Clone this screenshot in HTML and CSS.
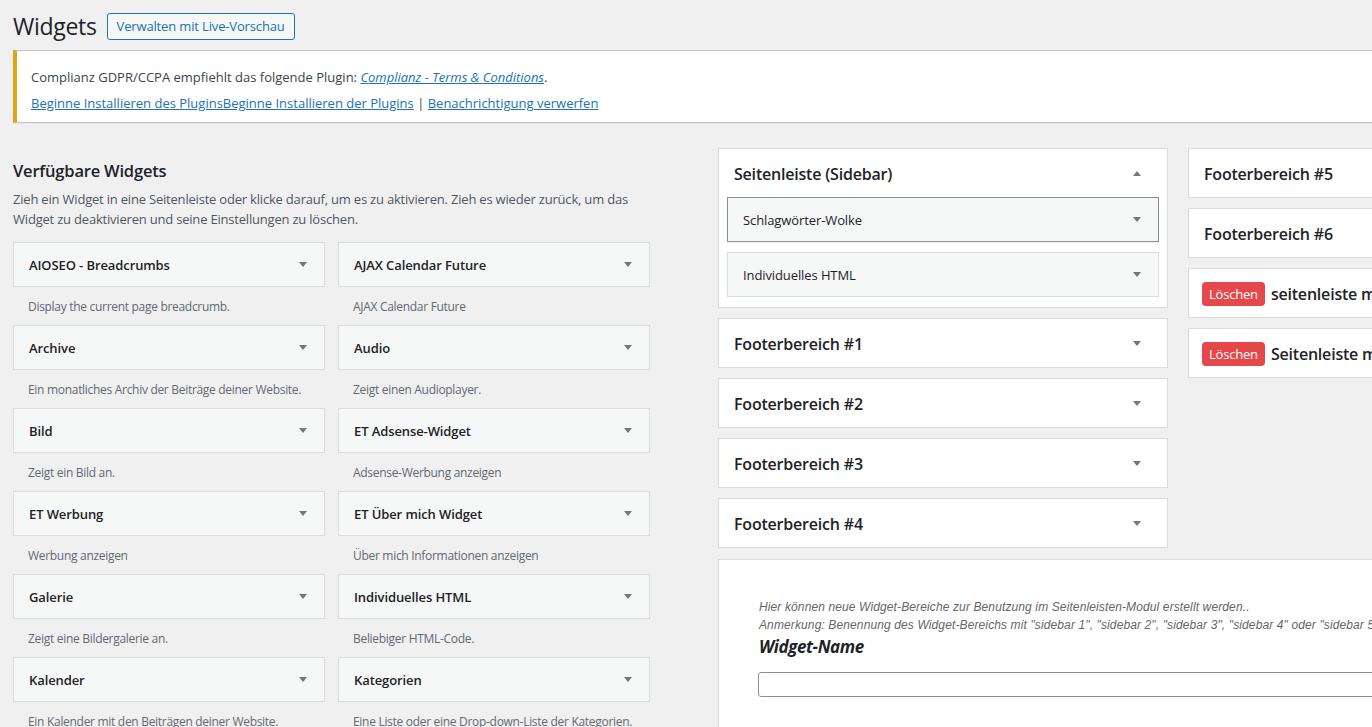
FILE: index.html
```html
<!DOCTYPE html>
<html lang="de">
<head>
<meta charset="utf-8">
<title>Widgets</title>
<link rel="stylesheet" href="styles.css">
</head>
<body>
<div class="wrap">
  <div class="page-head">
    <h1>Widgets</h1>
    <a class="page-title-action" href="#">Verwalten mit Live-Vorschau</a>
  </div>

  <div class="notice">
    <p>Complianz GDPR/CCPA empfiehlt das folgende Plugin: <a href="#"><em>Complianz - Terms &amp; Conditions</em></a>.</p>
    <p><a href="#">Beginne Installieren des PluginsBeginne Installieren der Plugins</a> | <a href="#">Benachrichtigung verwerfen</a></p>
  </div>

  <div class="widgets-layout">
    <div class="available">
      <h2 class="section-title">Verfügbare Widgets</h2>
      <p class="intro"><span>Zieh ein Widget in eine Seitenleiste oder klicke darauf, um es zu aktivieren. Zieh es wieder zurück, um das</span><span>Widget zu deaktivieren und seine Einstellungen zu löschen.</span></p>

      <div class="widget-grid">
        <div class="widget"><div class="widget-top"><h3>AIOSEO - Breadcrumbs</h3><span class="arrow"></span></div><div class="widget-desc">Display the current page breadcrumb.</div></div>
        <div class="widget"><div class="widget-top"><h3>AJAX Calendar Future</h3><span class="arrow"></span></div><div class="widget-desc">AJAX Calendar Future</div></div>
        <div class="widget"><div class="widget-top"><h3>Archive</h3><span class="arrow"></span></div><div class="widget-desc">Ein monatliches Archiv der Beiträge deiner Website.</div></div>
        <div class="widget"><div class="widget-top"><h3>Audio</h3><span class="arrow"></span></div><div class="widget-desc">Zeigt einen Audioplayer.</div></div>
        <div class="widget"><div class="widget-top"><h3>Bild</h3><span class="arrow"></span></div><div class="widget-desc">Zeigt ein Bild an.</div></div>
        <div class="widget"><div class="widget-top"><h3>ET Adsense-Widget</h3><span class="arrow"></span></div><div class="widget-desc">Adsense-Werbung anzeigen</div></div>
        <div class="widget"><div class="widget-top"><h3>ET Werbung</h3><span class="arrow"></span></div><div class="widget-desc">Werbung anzeigen</div></div>
        <div class="widget"><div class="widget-top"><h3>ET Über mich Widget</h3><span class="arrow"></span></div><div class="widget-desc">Über mich Informationen anzeigen</div></div>
        <div class="widget"><div class="widget-top"><h3>Galerie</h3><span class="arrow"></span></div><div class="widget-desc">Zeigt eine Bildergalerie an.</div></div>
        <div class="widget"><div class="widget-top"><h3>Individuelles HTML</h3><span class="arrow"></span></div><div class="widget-desc">Beliebiger HTML-Code.</div></div>
        <div class="widget"><div class="widget-top"><h3>Kalender</h3><span class="arrow"></span></div><div class="widget-desc">Ein Kalender mit den Beiträgen deiner Website.</div></div>
        <div class="widget"><div class="widget-top"><h3>Kategorien</h3><span class="arrow"></span></div><div class="widget-desc">Eine Liste oder eine Drop-down-Liste der Kategorien.</div></div>
      </div>
    </div>

    <div class="sidebars">
      <div class="sidebar-col">
        <div class="sidebar">
          <div class="sidebar-name"><h2>Seitenleiste (Sidebar)</h2><span class="arrow up"></span></div>
          <div class="sidebar-body">
            <div class="sw-top active"><h3>Schlagwörter-Wolke</h3><span class="arrow"></span></div>
            <div class="sw-top"><h3>Individuelles HTML</h3><span class="arrow"></span></div>
          </div>
        </div>
        <div class="sidebar"><div class="sidebar-name"><h2>Footerbereich #1</h2><span class="arrow"></span></div></div>
        <div class="sidebar"><div class="sidebar-name"><h2>Footerbereich #2</h2><span class="arrow"></span></div></div>
        <div class="sidebar"><div class="sidebar-name"><h2>Footerbereich #3</h2><span class="arrow"></span></div></div>
        <div class="sidebar"><div class="sidebar-name"><h2>Footerbereich #4</h2><span class="arrow"></span></div></div>
      </div>

      <div class="sidebar-col">
        <div class="sidebar"><div class="sidebar-name"><h2>Footerbereich #5</h2><span class="arrow"></span></div></div>
        <div class="sidebar"><div class="sidebar-name"><h2>Footerbereich #6</h2><span class="arrow"></span></div></div>
        <div class="sidebar"><div class="sidebar-name custom"><span class="del">Löschen</span><h2>seitenleiste mobil</h2></div></div>
        <div class="sidebar"><div class="sidebar-name custom"><span class="del">Löschen</span><h2>Seitenleiste mobile</h2></div></div>
      </div>

      <div class="custom-panel">
        <p class="hint">Hier können neue Widget-Bereiche zur Benutzung im Seitenleisten-Modul erstellt werden..</p>
        <p class="hint">Anmerkung: Benennung des Widget-Bereichs mit "sidebar 1", "sidebar 2", "sidebar 3", "sidebar 4" oder "sidebar 5" wird nicht unterstützt.</p>
        <div class="field-label">Widget-Name</div>
        <input class="field" type="text">
      </div>
    </div>
  </div>
</div>
</body>
</html>
```

FILE: styles.css
```css
* { box-sizing: border-box; }

html, body { margin: 0; padding: 0; }

body {
  width: 1372px;
  height: 727px;
  overflow: hidden;
  background: #f0f0f1;
  font-family: "Open Sans", "Noto Sans", sans-serif;
  font-size: 13px;
  color: #3c434a;
}

.wrap {
  width: 1640px;
  padding: 13px 0 0 13px;
}

/* header */
.page-head {
  display: flex;
  align-items: center;
  height: 27px;
}

.page-head h1 {
  margin: 0 10px 0 0;
  font-size: 23px;
  font-weight: 400;
  line-height: 27px;
  color: #1d2327;
  letter-spacing: -0.3px;
}

.page-title-action {
  display: inline-block;
  height: 27px;
  line-height: 25px;
  padding: 0 9px;
  border: 1px solid #2271b1;
  border-radius: 3px;
  background: #f6f7f7;
  color: #2271b1;
  text-decoration: none;
  font-size: 13px;
  letter-spacing: -0.15px;
}

/* notice */
.notice {
  margin-top: 10px;
  background: #fff;
  border: 1px solid #c3c4c7;
  border-left: 4px solid #dba617;
  padding: 16px 12px 9px 14px;
  box-shadow: 0 1px 1px rgba(0, 0, 0, 0.04);
}

.notice p {
  margin: 0;
  line-height: 20px;
}

.notice p + p { margin-top: 6px; }

.notice a { color: #2271b1; }

/* layout */
.widgets-layout {
  display: flex;
  align-items: flex-start;
  margin-top: 25px;
}

.available {
  flex: none;
  width: 637px;
  margin-right: 68px;
}

.section-title {
  margin: 12px 0 8px;
  font-size: 16.5px;
  font-weight: 600;
  line-height: 22px;
  color: #1d2327;
  letter-spacing: -0.2px;
}

.intro {
  margin: 0 0 13px;
  line-height: 19.5px;
  color: #50575e;
  letter-spacing: -0.2px;
}

.intro span {
  display: block;
  white-space: nowrap;
}

.widget-grid {
  display: grid;
  grid-template-columns: 312px 312px;
  column-gap: 13px;
}

.widget-top {
  height: 45px;
  display: flex;
  align-items: center;
  justify-content: space-between;
  padding: 0 17px 0 15px;
  border: 1px solid #dcdcde;
  background: #f6f7f7;
}

.widget-top h3,
.sw-top h3 {
  margin: 0;
  font-size: 13px;
  font-weight: 600;
  color: #1d2327;
  letter-spacing: -0.1px;
}

.widget-desc {
  height: 38px;
  padding: 10px 15px 9px;
  font-size: 12px;
  line-height: 19px;
  color: #646970;
  white-space: nowrap;
  letter-spacing: -0.3px;
}

.arrow {
  flex: none;
  width: 0;
  height: 0;
  border-left: 4px solid transparent;
  border-right: 4px solid transparent;
  border-top: 5px solid #72777c;
}

.arrow.up {
  border-top: 0;
  border-bottom: 5px solid #72777c;
}

/* sidebars */
.sidebars {
  flex: none;
  display: grid;
  grid-template-columns: 450px 450px;
  column-gap: 20px;
  align-items: start;
}

.sidebar-col {
  display: flex;
  flex-direction: column;
  gap: 10px;
}

.sidebar {
  background: #fff;
  border: 1px solid #dcdcde;
}

.sidebar-name {
  height: 48px;
  display: flex;
  align-items: center;
  justify-content: space-between;
  padding: 1px 26px 0 15px;
  overflow: hidden;
}

.sidebar-name h2 {
  margin: 0;
  font-size: 16px;
  font-weight: 600;
  line-height: 22px;
  color: #1d2327;
  white-space: nowrap;
  letter-spacing: -0.2px;
}

.sidebar-name.custom {
  justify-content: flex-start;
  gap: 6px;
  padding-left: 13px;
}

.del {
  flex: none;
  height: 24px;
  line-height: 24px;
  padding: 0 7px;
  border-radius: 4px;
  background: #e5474b;
  color: #fff;
  font-size: 13px;
  letter-spacing: -0.2px;
}

.sidebar-body {
  display: flex;
  flex-direction: column;
  gap: 10px;
  padding: 0 8px 10px;
}

.sw-top {
  height: 45px;
  display: flex;
  align-items: center;
  justify-content: space-between;
  padding: 0 17px 0 15px;
  border: 1px solid #dcdcde;
  background: #f6f7f7;
}

.sw-top h3 { font-weight: 500; }

.sw-top.active {
  border-color: #8c8f94;
  box-shadow: 0 1px 2px rgba(0, 0, 0, 0.07);
}

/* custom widget area panel */
.custom-panel {
  grid-column: 1 / -1;
  margin-top: 11px;
  height: 220px;
  background: #fff;
  border: 1px solid #dcdcde;
  padding: 38px 40px 30px;
}

.hint {
  margin: 0;
  font-family: "Liberation Sans", Arial, sans-serif;
  font-style: italic;
  font-size: 12px;
  line-height: 18px;
  color: #666;
  white-space: nowrap;
  letter-spacing: 0.12px;
}

.field-label {
  margin-top: 2px;
  font-size: 17px;
  font-weight: 700;
  font-style: italic;
  line-height: 22px;
  color: #1d2327;
  letter-spacing: -0.4px;
}

.field {
  display: block;
  width: 100%;
  height: 25px;
  margin: 14px 0 0 -1px;
  border: 1px solid #8c8f94;
  border-radius: 3px;
  background: #fff;
}
```
